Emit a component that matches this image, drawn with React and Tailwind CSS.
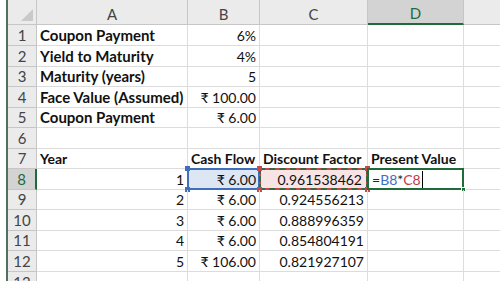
import React from 'react'

const rowHeights = [21, 21, 20, 21, 20, 21, 20, 21, 20, 21, 20, 21, 21]

const data = {
  1: ['Coupon Payment', '6%', '', ''],
  2: ['Yield to Maturity', '4%', '', ''],
  3: ['Maturity (years)', '5', '', ''],
  4: ['Face Value (Assumed)', '₹ 100.00', '', ''],
  5: ['Coupon Payment', '₹ 6.00', '', ''],
  6: ['', '', '', ''],
  7: ['Year', 'Cash Flow', 'Discount Factor', 'Present Value'],
  8: ['1', '₹ 6.00', '0.961538462', ''],
  9: ['2', '₹ 6.00', '0.924556213', ''],
  10: ['3', '₹ 6.00', '0.888996359', ''],
  11: ['4', '₹ 6.00', '0.854804191', ''],
  12: ['5', '₹ 106.00', '0.821927107', ''],
  13: ['', '', '', ''],
}

function Square({ className }) {
  return <span className={`absolute w-[5px] h-[5px] ${className}`} />
}

function Cell({ row, col, value }) {
  const bold = row <= 5 ? col === 0 : row === 7
  const left = row <= 5 ? col === 0 : row === 7
  const big = row <= 5 && col === 0
  const base = 'relative flex items-center border-r border-b border-[#dcdcdc] px-[3px] whitespace-nowrap overflow-visible'

  if (row === 8 && col === 1) {
    return (
      <div className={`${base} justify-end bg-[#dde7f4]`}>
        <div className="absolute inset-[-1px] border-2 border-[#3f6fb8]" />
        <Square className="left-[-3px] top-[-3px] bg-[#3f6fb8]" />
        <Square className="left-[-3px] bottom-[-3px] bg-[#3f6fb8]" />
        <span className="relative">{value}</span>
      </div>
    )
  }
  if (row === 8 && col === 2) {
    return (
      <div className={`${base} justify-end bg-[#f8e4e4]`}>
        <div className="absolute inset-[-1px] border-2 border-[#c9474b] outline-2 outline-dashed outline-[#39683f] -outline-offset-2" />
        <Square className="left-[-3px] top-[-3px] bg-[#c9474b]" />
        <Square className="left-[-3px] bottom-[-3px] bg-[#c9474b]" />
        <Square className="right-[-3px] top-[-3px] bg-[#c9474b]" />
        <Square className="right-[-3px] bottom-[-3px] bg-[#c9474b]" />
        <span className="relative pr-[2px]">{value}</span>
      </div>
    )
  }
  if (row === 8 && col === 3) {
    return (
      <div className={`${base} justify-start bg-white`}>
        <div className="absolute inset-[-1px] border-2 border-[#1f6b3a]" />
        <Square className="right-[-3px] bottom-[-3px] bg-[#1f6b3a] border border-white" />
        <span className="relative flex items-center pl-[1px]">
          <span className="text-[#222]">=</span>
          <span className="text-[#3d6fc4]">B8</span>
          <span className="text-[#222]">*</span>
          <span className="text-[#c23b3f]">C8</span>
          <span className="ml-[1px] w-px h-[17px] bg-black" />
        </span>
      </div>
    )
  }

  return (
    <div
      className={`${base} ${left ? 'justify-start' : 'justify-end'} ${bold ? 'font-bold' : ''} ${
        big ? 'text-[15px]' : ''
      }`}
    >
      <span className="relative">{value}</span>
    </div>
  )
}

export default function App() {
  const cols = ['A', 'B', 'C', 'D']
  return (
    <div
      className="w-[500px] h-[281px] overflow-hidden bg-white flex text-[14px] text-[#111]"
      style={{ fontFamily: 'Lato, "Noto Sans", "DejaVu Sans", sans-serif' }}
    >
      <div className="w-[6px] shrink-0 bg-white" />
      <div className="w-[2px] shrink-0 bg-[#51705f]" />
      <div
        className="grid grid-cols-[29px_151px_72px_108px_96px_60px] grid-rows-[25px_21px_21px_20px_21px_20px_21px_20px_21px_20px_21px_20px_21px_21px]"
      >
        {/* corner */}
        <div className="relative bg-[#ebebeb] border-r border-b border-[#c6c6c6]">
          <div className="absolute right-[3px] bottom-[3px] w-0 h-0 border-l-[12px] border-l-transparent border-b-[12px] border-b-[#c9c9c9]" />
        </div>
        {cols.map((c) => (
          <div
            key={c}
            className={`flex items-center justify-center pt-[4px] text-[15px] ${
              c === 'D'
                ? 'bg-[#d3d3d3] text-[#1e6b41] border-r border-[#c6c6c6] border-b-2 border-b-[#1f6b3a]'
                : 'bg-[#ebebeb] text-[#444] border-r border-b border-[#c6c6c6]'
            }`}
          >
            {c}
          </div>
        ))}
        <div className="bg-[#ebebeb] border-b border-[#c6c6c6]" />

        {rowHeights.map((_, i) => {
          const row = i + 1
          const sel = row === 8
          return (
            <React.Fragment key={row}>
              <div
                className={`flex items-center justify-center text-[15px] ${
                  sel
                    ? 'bg-[#d3d3d3] text-[#1e6b41] border-b border-[#c6c6c6] border-r-2 border-r-[#1f6b3a]'
                    : 'bg-[#ebebeb] text-[#444] border-r border-b border-[#c6c6c6]'
                }`}
              >
                {row}
              </div>
              {data[row].map((v, col) => (
                <Cell key={col} row={row} col={col} value={v} />
              ))}
              <div className="border-b border-[#dcdcdc]" />
            </React.Fragment>
          )
        })}
      </div>
    </div>
  )
}
